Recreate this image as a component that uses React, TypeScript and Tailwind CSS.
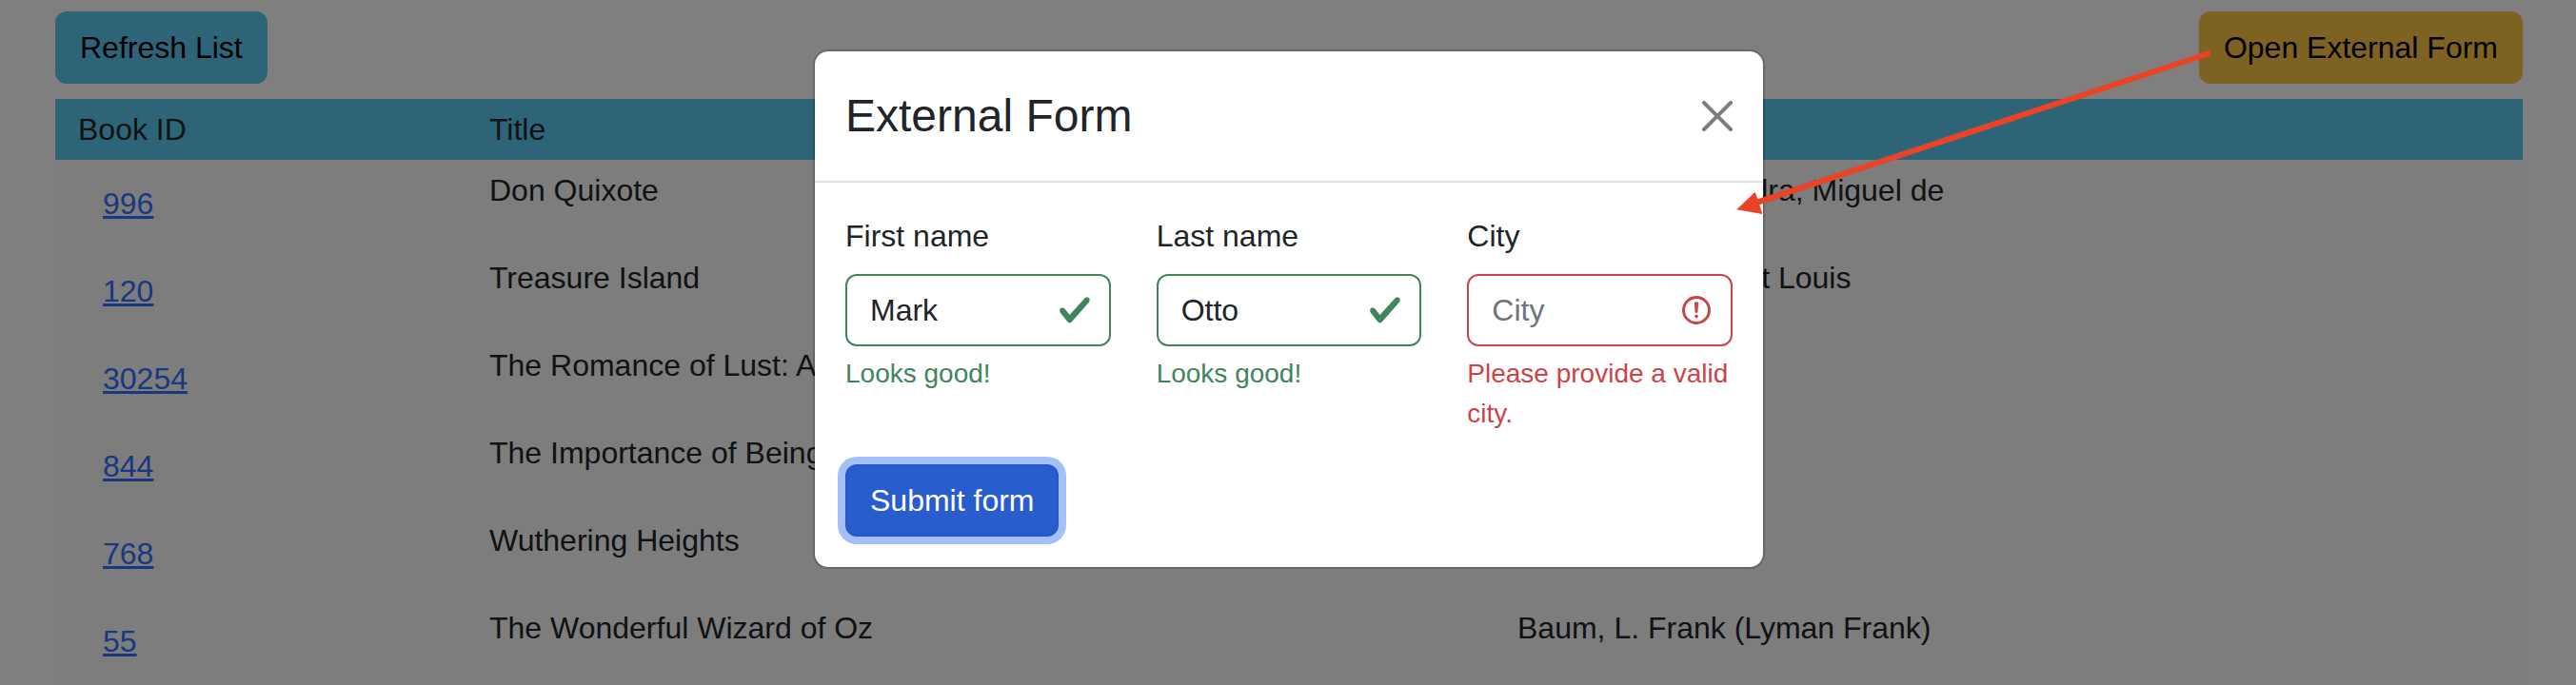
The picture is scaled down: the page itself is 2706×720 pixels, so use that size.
import React from "react";

const books = [
  { id: "996", title: "Don Quixote", author: "Cervantes Saavedra, Miguel de" },
  { id: "120", title: "Treasure Island", author: "Stevenson, Robert Louis" },
  { id: "30254", title: "The Romance of Lust: A", author: "" },
  { id: "844", title: "The Importance of Being", author: "" },
  { id: "768", title: "Wuthering Heights", author: "" },
  { id: "55", title: "The Wonderful Wizard of Oz", author: "Baum, L. Frank (Lyman Frank)" },
];

function CheckIcon() {
  return (
    <svg viewBox="0 0 8 8" className="size-9 shrink-0">
      <path
        fill="#41865a"
        d="M2.3 6.73L.6 4.53c-.4-1.04.46-1.4 1.1-.8l1.1 1.4 3.4-3.8c.6-.63 1.6-.27 1.2.7l-4 4.6c-.43.5-.8.4-1.1.1z"
      />
    </svg>
  );
}

function ErrorIcon() {
  return (
    <svg viewBox="0 0 12 12" fill="none" stroke="#cb444a" className="size-9 shrink-0">
      <circle cx="6" cy="6" r="4.5" />
      <path strokeLinejoin="round" d="M5.8 3.6h.4L6 6.5z" />
      <circle cx="6" cy="8.2" r=".6" fill="#cb444a" stroke="none" />
    </svg>
  );
}

function CloseIcon() {
  return (
    <svg viewBox="0 0 16 16" className="size-8" fill="#000">
      <path d="M.293.293a1 1 0 0 1 1.414 0L8 6.586 14.293.293a1 1 0 1 1 1.414 1.414L9.414 8l6.293 6.293a1 1 0 0 1-1.414 1.414L8 9.414l-6.293 6.293a1 1 0 0 1-1.414-1.414L6.586 8 .293 1.707a1 1 0 0 1 0-1.414z" />
    </svg>
  );
}

type FieldProps = {
  label: string;
  value?: string;
  placeholder?: string;
  valid: boolean;
  feedback: string;
};

function Field({ label, value, placeholder, valid, feedback }: FieldProps) {
  return (
    <div className="min-w-0">
      <div className="mb-4">{label}</div>
      <div
        className={
          valid
            ? "flex h-[76px] items-center justify-between rounded-xl border-2 border-[#41865a] pl-6 pr-[18px]"
            : "flex h-[76px] items-center justify-between rounded-xl border-2 border-[#cb444a] pl-6 pr-[18px]"
        }
      >
        {value ? <span>{value}</span> : <span className="text-[#6e757c]">{placeholder}</span>}
        {valid ? <CheckIcon /> : <ErrorIcon />}
      </div>
      <div
        className={
          valid
            ? "mt-2 text-[28px] leading-[42px] text-[#41865a]"
            : "mt-2 text-[28px] leading-[42px] text-[#cb444a]"
        }
      >
        {feedback}
      </div>
    </div>
  );
}

export default function App() {
  return (
    <div className="relative h-[720px] w-[2706px] overflow-hidden bg-white font-['Liberation_Sans',Arial,sans-serif] text-[32px] leading-[48px] text-[#212529]">
      <main className="pl-[58px] pr-[56px] pt-3">
        <div className="mb-4 flex justify-between text-black">
          <button className="h-[76px] rounded-xl bg-[#5cc8ee] px-[26px]">Refresh List</button>
          <button className="h-[76px] rounded-xl bg-[#fac444] px-[26px]">Open External Form</button>
        </div>
        <div className="grid grid-cols-[432px_1080px_1fr] bg-[#5cc8ee] py-2 pl-6">
          <span>Book ID</span>
          <span>Title</span>
        </div>
        {books.map((book) => (
          <div key={book.id} className="grid h-[92px] grid-cols-[432px_1080px_1fr] bg-[#fafafa] py-2 pl-6">
            <a className="px-[26px] py-[14px] text-[#3270ff] underline decoration-[3px] underline-offset-2">{book.id}</a>
            <span>{book.title}</span>
            <span>{book.author}</span>
          </div>
        ))}
      </main>

      <div className="absolute inset-0 flex items-start justify-center bg-black/50 pt-[52px]">
        <section className="mr-[-2px] w-[1000px] rounded-2xl border-2 border-black/[0.175] bg-white bg-clip-padding">
          <header className="flex items-center justify-between border-b-2 border-[#dee2e6] p-8">
            <h4 className="text-[48px] leading-[72px]">External Form</h4>
            <button className="opacity-50">
              <CloseIcon />
            </button>
          </header>
          <div className="p-8">
            <div className="grid grid-cols-3 gap-12">
              <Field label="First name" value="Mark" valid feedback="Looks good!" />
              <Field label="Last name" value="Otto" valid feedback="Looks good!" />
              <Field label="City" placeholder="City" valid={false} feedback="Please provide a valid city." />
            </div>
            <button className="mt-8 block h-[76px] rounded-xl border-2 border-[#2958c4] bg-[#295dce] px-6 text-white ring-8 ring-[#a3c0fa]">
              Submit form
            </button>
          </div>
        </section>
      </div>

      <svg viewBox="0 0 500 180" className="absolute left-[1823px] top-[50px] h-[180px] w-[500px]" fill="#ea4326">
        <polygon points="1.3,170.3 20.7,151.7 23.3,159.2 499,2.6 499,8.7 25.3,165.2 28.3,175" />
      </svg>
    </div>
  );
}
